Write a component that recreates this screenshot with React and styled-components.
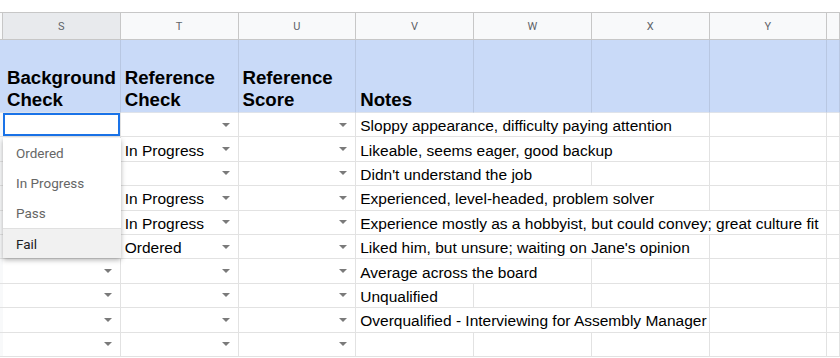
import React from 'react';
import styled, { createGlobalStyle } from 'styled-components';

const GlobalStyle = createGlobalStyle`
  html, body {
    margin: 0;
    padding: 0;
    background: #fff;
  }
  body {
    font-family: Arial, "Liberation Sans", sans-serif;
  }
`;

const COLS = '3px repeat(7, 117.75px) 1fr';

const Sheet = styled.div`
  position: relative;
  width: 840px;
  height: 358px;
  padding-top: 12px;
  box-sizing: border-box;
  overflow: hidden;
`;

const Row = styled.div`
  display: grid;
  grid-template-columns: ${COLS};
  height: ${p => p.$h}px;
`;

const LetterRow = styled(Row)`
  border-top: 1px solid #c7c7c7;
  box-sizing: border-box;
`;

const Letter = styled.div`
  display: flex;
  align-items: center;
  justify-content: center;
  background: ${p => (p.$active ? '#e8eaed' : '#f8f9fa')};
  border-right: 1px solid #c7c7c7;
  border-bottom: 1px solid #c7c7c7;
  font-family: Roboto, Arial, sans-serif;
  font-size: 11px;
  color: #5f6368;
`;

const TitleCell = styled.div`
  display: flex;
  align-items: flex-end;
  padding: 0 4px 2px;
  background: #c9daf8;
  border-right: 1px solid #b8c7e2;
  border-bottom: 1px solid #dfe3ea;
  font-weight: bold;
  font-size: 18.67px;
  line-height: 21.5px;
  color: #000;
  white-space: nowrap;
  overflow: hidden;
`;

const Cell = styled.div`
  position: relative;
  display: flex;
  align-items: center;
  padding: 0 4px;
  border-right: 1px solid ${p => (p.$stub ? '#c7c7c7' : '#e2e2e2')};
  border-bottom: 1px solid #e2e2e2;
  background: ${p => (p.$stub ? '#f8f9fa' : '#fff')};
  box-shadow: ${p => (p.$selected ? 'inset 0 0 0 2px #1a73e8' : 'none')};
  grid-column: span ${p => p.$span || 1};
  font-size: 15.5px;
  color: #000;
  white-space: nowrap;
  min-width: 0;
`;

const Value = styled.span`
  padding-top: 3px;
  flex: 1;
`;

const Arrow = styled.span`
  width: 0;
  height: 0;
  margin-right: 4px;
  border-left: 4px solid transparent;
  border-right: 4px solid transparent;
  border-top: 4px solid #7a7a7a;
`;

const Menu = styled.ul`
  position: absolute;
  left: 3px;
  top: 138px;
  width: 118px;
  margin: 0;
  padding: 0;
  list-style: none;
  background: #fff;
  box-shadow: 0 2px 5px rgba(0, 0, 0, 0.3);
  font-family: Roboto, Arial, sans-serif;
  font-size: 13.5px;
`;

const MenuItem = styled.li`
  height: ${p => (p.$divided ? 29 : 30)}px;
  display: flex;
  align-items: center;
  padding-left: 13px;
  color: ${p => (p.$hover ? '#202124' : '#666')};
  background: ${p => (p.$hover ? '#f1f1f1' : '#fff')};
  border-top: ${p => (p.$divided ? '1px solid #e0e0e0' : 'none')};
`;

const letters = ['S', 'T', 'U', 'V', 'W', 'X', 'Y', 'Z'];

const rows = [
  { note: 'Sloppy appearance, difficulty paying attention', span: 3, selected: true },
  { t: 'In Progress', note: 'Likeable, seems eager, good backup', span: 3 },
  { note: "Didn't understand the job", span: 2 },
  { t: 'In Progress', note: 'Experienced, level-headed, problem solver', span: 3 },
  { t: 'In Progress', note: 'Experience mostly as a hobbyist, but could convey; great culture fit', span: 4 },
  { t: 'Ordered', note: "Liked him, but unsure; waiting on Jane's opinion", span: 3 },
  { note: 'Average across the board', span: 2 },
  { note: 'Unqualified', span: 1 },
  { note: 'Overqualified - Interviewing for Assembly Manager', span: 3 },
  { note: '', span: 1 },
];

const DropCell = ({ value, selected }) => (
  <Cell $selected={selected}>
    <Value>{value}</Value>
    {!selected && <Arrow />}
  </Cell>
);

const DataRow = ({ row }) => {
  const rest = 4 - row.span;
  return (
    <Row $h={24.4}>
      <Cell $stub />
      <DropCell selected={row.selected} />
      <DropCell value={row.t} />
      <DropCell />
      <Cell $span={row.span}>
        <Value>{row.note}</Value>
      </Cell>
      {Array.from({ length: rest }).map((_, i) => (
        <Cell key={i} />
      ))}
      <Cell />
    </Row>
  );
};

const App = () => (
  <Sheet>
    <GlobalStyle />
    <LetterRow $h={28}>
      <Letter />
      {letters.map(l => (
        <Letter key={l} $active={l === 'S'}>
          {l === 'Z' ? '' : l}
        </Letter>
      ))}
    </LetterRow>
    <Row $h={73}>
      <TitleCell />
      <TitleCell>
        Background
        <br />
        Check
      </TitleCell>
      <TitleCell>
        Reference
        <br />
        Check
      </TitleCell>
      <TitleCell>
        Reference
        <br />
        Score
      </TitleCell>
      <TitleCell>Notes</TitleCell>
      <TitleCell />
      <TitleCell />
      <TitleCell />
      <TitleCell />
    </Row>
    {rows.map((r, i) => (
      <DataRow key={i} row={r} />
    ))}
    <Menu>
      <MenuItem>Ordered</MenuItem>
      <MenuItem>In Progress</MenuItem>
      <MenuItem>Pass</MenuItem>
      <MenuItem $divided $hover>
        Fail
      </MenuItem>
    </Menu>
  </Sheet>
);

export default App;
